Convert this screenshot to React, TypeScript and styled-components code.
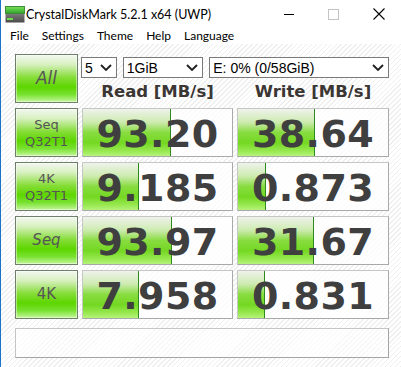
import React from 'react';
import styled, { createGlobalStyle } from 'styled-components';

const GlobalStyle = createGlobalStyle`
  html, body {
    margin: 0;
    padding: 0;
    background: #ffffff;
  }
  body {
    width: 401px;
    height: 367px;
    overflow: hidden;
  }
`;

const Window = styled.div`
  box-sizing: border-box;
  width: 401px;
  height: 367px;
  border-left: 1px solid #1a73c8;
  border-bottom: 2px solid #1a73c8;
  display: flex;
  flex-direction: column;
  background: #ffffff;
  font-family: 'Liberation Sans', Arial, sans-serif;
  color: #000;
`;

const TitleBar = styled.div`
  height: 28px;
  display: flex;
  align-items: center;
  padding-left: 4px;
`;

const TitleText = styled.div`
  flex: 1;
  margin-left: 1px;
  font-family: Lato, 'Liberation Sans', sans-serif;
  font-size: 12.5px;
  color: #000;
`;

const Control = styled.div`
  width: 45px;
  height: 28px;
  display: flex;
  align-items: center;
  justify-content: center;
`;

const MenuBar = styled.div`
  height: 16px;
  display: flex;
  align-items: center;
  padding-left: 9px;
  gap: 13px;
`;

const MenuItem = styled.span`
  font-family: Lato, 'Liberation Sans', sans-serif;
  font-size: 12px;
  line-height: 16px;
  color: #000;
`;

const Content = styled.div`
  flex: 1;
  padding: 10px 0 0 14px;
  background: repeating-linear-gradient(
    135deg,
    #ffffff 0px,
    #ffffff 2.4px,
    #efefef 2.4px,
    #efefef 3.5px
  );
`;

const Board = styled.div`
  display: grid;
  grid-template-columns: 63px 151px 152px;
  grid-auto-rows: 49px;
  column-gap: 4px;
  row-gap: 5px;
`;

const TestButton = styled.div<{ $italic?: boolean; $size: number }>`
  box-sizing: border-box;
  border: 1px solid #6f806a;
  box-shadow: inset 0 0 0 1px rgba(255, 255, 255, 0.45);
  background: linear-gradient(
    to bottom,
    #f3f7f0 0%,
    #d8f1c0 20%,
    #86dd38 48%,
    #5dd600 68%,
    #78e130 84%,
    #c4f79a 100%
  );
  display: flex;
  flex-direction: column;
  align-items: center;
  justify-content: center;
  color: #555555;
  font-family: 'DejaVu Sans', Verdana, sans-serif;
  font-size: ${(p) => p.$size}px;
  font-style: ${(p) => (p.$italic ? 'italic' : 'normal')};
  line-height: ${(p) => p.$size + 4}px;
`;

const TopPanel = styled.div`
  grid-column: 2 / 4;
  display: flex;
  flex-direction: column;
  padding-top: 3px;
`;

const SelectRow = styled.div`
  display: flex;
  gap: 6px;
  margin-left: -1px;
`;

const SelectBox = styled.div<{ $w: number }>`
  box-sizing: border-box;
  width: ${(p) => p.$w}px;
  height: 21px;
  border: 1px solid #7a7a7a;
  background: #ffffff;
  display: flex;
  align-items: center;
  justify-content: space-between;
  padding: 0 4px 0 3px;
  font-family: 'Liberation Sans', Arial, sans-serif;
  font-size: 14px;
  color: #000;
`;

const HeaderRow = styled.div`
  display: grid;
  grid-template-columns: 151px 152px;
  column-gap: 4px;
  height: 25px;
  align-items: center;
`;

const Heading = styled.div`
  text-align: center;
  font-family: 'DejaVu Sans', Verdana, sans-serif;
  font-weight: bold;
  font-size: 16.5px;
  color: #3b3633;
  padding-top: 2px;
`;

const ValueBox = styled.div<{ $bar: number }>`
  box-sizing: border-box;
  border: 1px solid #c6c6c6;
  border-right-color: #a9a9a9;
  border-bottom-color: #a9a9a9;
  background:
    linear-gradient(#2f8a1e, #2f8a1e) ${(p) => p.$bar}px 0 / 1px 100% no-repeat,
    linear-gradient(
        to bottom,
        #eff3ec 0%,
        #cdebb0 28%,
        #88dc40 50%,
        #74d822 72%,
        #9ae952 90%,
        #b6f27c 100%
      )
      0 0 / ${(p) => p.$bar}px 100% no-repeat,
    rgba(255, 255, 255, 0.75);
  display: flex;
  align-items: center;
  justify-content: center;
  padding-top: 3px;
  font-family: 'DejaVu Sans', Verdana, sans-serif;
  font-weight: bold;
  font-size: 38px;
  color: #3f3f3f;
  letter-spacing: 0.4px;
`;

const CommentBox = styled.div`
  grid-column: 1 / 4;
  margin-top: 4px;
  height: 30px;
  box-sizing: border-box;
  border: 1px solid #c6c6c6;
  border-right-color: #a4a4a4;
  border-bottom-color: #a4a4a4;
  background: rgba(255, 255, 255, 0.55);
`;

const Chevron = () => (
  <svg width="12" height="7" viewBox="0 0 12 7">
    <path d="M1 1 L6 6 L11 1" fill="none" stroke="#1e1e1e" strokeWidth="1.8" />
  </svg>
);

const AppIcon = () => (
  <svg width="20" height="17" viewBox="0 0 20 17">
    <defs>
      <linearGradient id="top" x1="0" y1="0" x2="0" y2="1">
        <stop offset="0" stopColor="#7be05a" />
        <stop offset="1" stopColor="#2fa32a" />
      </linearGradient>
      <linearGradient id="base" x1="0" y1="0" x2="0" y2="1">
        <stop offset="0" stopColor="#7a7a7a" />
        <stop offset="1" stopColor="#4a4a4a" />
      </linearGradient>
    </defs>
    <rect x="0.5" y="0.5" width="19" height="7" fill="url(#top)" stroke="#3f8c36" />
    <rect x="0.5" y="8" width="19" height="8.5" fill="url(#base)" />
    <rect x="2" y="12" width="6" height="2" fill="#6ee04a" />
  </svg>
);

const rows = [
  { label: ['Seq', 'Q32T1'], size: 13, italic: false, read: '93.20', readBar: 87, write: '38.64', writeBar: 76 },
  { label: ['4K', 'Q32T1'], size: 13, italic: false, read: '9.185', readBar: 55, write: '0.873', writeBar: 27 },
  { label: ['Seq'], size: 15, italic: true, read: '93.97', readBar: 88, write: '31.67', writeBar: 75 },
  { label: ['4K'], size: 15, italic: false, read: '7.958', readBar: 55, write: '0.831', writeBar: 26 },
];

export default function App() {
  return (
    <>
      <GlobalStyle />
      <Window>
        <TitleBar>
          <AppIcon />
          <TitleText>CrystalDiskMark 5.2.1 x64 (UWP)</TitleText>
          <Control>
            <svg width="10" height="1" viewBox="0 0 10 1">
              <rect width="10" height="1" fill="#000" />
            </svg>
          </Control>
          <Control>
            <svg width="11" height="11" viewBox="0 0 11 11">
              <rect x="0.5" y="0.5" width="10" height="10" fill="none" stroke="#c4c4c4" />
            </svg>
          </Control>
          <Control>
            <svg width="12" height="12" viewBox="0 0 12 12">
              <path d="M0.5 0.5 L11.5 11.5 M11.5 0.5 L0.5 11.5" stroke="#000" strokeWidth="1.1" />
            </svg>
          </Control>
        </TitleBar>
        <MenuBar>
          <MenuItem>File</MenuItem>
          <MenuItem>Settings</MenuItem>
          <MenuItem>Theme</MenuItem>
          <MenuItem>Help</MenuItem>
          <MenuItem>Language</MenuItem>
        </MenuBar>
        <Content>
          <Board>
            <TestButton $size={17} $italic>
              All
            </TestButton>
            <TopPanel>
              <SelectRow>
                <SelectBox $w={36}>
                  <span>5</span>
                  <Chevron />
                </SelectBox>
                <SelectBox $w={81}>
                  <span>1GiB</span>
                  <Chevron />
                </SelectBox>
                <SelectBox $w={181}>
                  <span>E: 0% (0/58GiB)</span>
                  <Chevron />
                </SelectBox>
              </SelectRow>
              <HeaderRow>
                <Heading>Read [MB/s]</Heading>
                <Heading>Write [MB/s]</Heading>
              </HeaderRow>
            </TopPanel>
            {rows.map((r) => (
              <React.Fragment key={r.label.join('') + r.read}>
                <TestButton $size={r.size} $italic={r.italic}>
                  {r.label.map((l) => (
                    <span key={l}>{l}</span>
                  ))}
                </TestButton>
                <ValueBox $bar={r.readBar}>{r.read}</ValueBox>
                <ValueBox $bar={r.writeBar}>{r.write}</ValueBox>
              </React.Fragment>
            ))}
            <CommentBox />
          </Board>
        </Content>
      </Window>
    </>
  );
}
